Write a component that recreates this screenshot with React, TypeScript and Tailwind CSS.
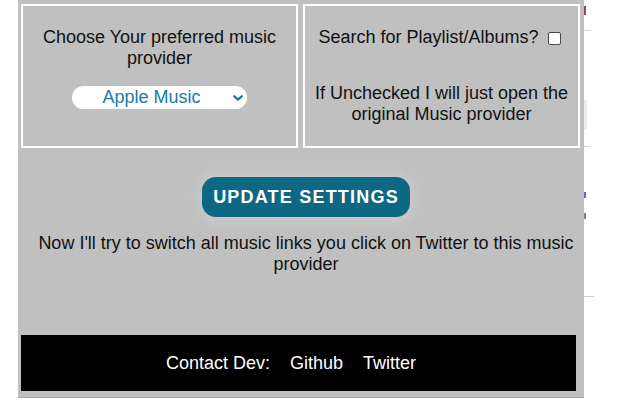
import React from "react";

export default function App() {
  return (
    <div
      className="relative w-[640px] h-[400px] bg-white overflow-hidden flex text-[#111]"
      style={{ fontFamily: '"Liberation Sans", Arial, sans-serif' }}
    >
      <div className="ml-[18px] w-[566px] h-[398px] bg-[#c0c0c0] border-b border-[#a9a9a9] pt-[4px] pl-[3px] pb-[6px] flex flex-col">
        {/* settings boxes */}
        <div className="flex gap-[5px]">
          <div className="w-[277px] h-[144px] border-2 border-white pt-[21px] flex flex-col items-center text-[18px] leading-[21px] text-center">
            <div className="px-[14px]">Choose Your preferred music provider</div>
            <div className="relative mt-[17px] w-[175px] h-[23px]">
              <select
                defaultValue="apple"
                className="appearance-none w-full h-full rounded-full bg-white border-0 outline-none text-[#1b7aa6] text-[18px] leading-[21px] pr-[16px] pl-0 py-0 text-center [text-align-last:center]"
                style={{ fontFamily: '"Liberation Sans", Arial, sans-serif' }}
              >
                <option value="apple">Apple Music</option>
                <option value="spotify">Spotify</option>
                <option value="youtube">YouTube Music</option>
              </select>
              <svg
                className="absolute right-[4px] top-[9px] pointer-events-none"
                width="10"
                height="6"
                viewBox="0 0 10 6"
              >
                <path d="M1.2 1.2 L5 4.6 L8.8 1.2" fill="none" stroke="#1b6f99" strokeWidth="2.2" strokeLinecap="round" strokeLinejoin="round" />
              </svg>
            </div>
          </div>
          <div className="w-[277px] h-[144px] border-2 border-white pt-[21px] flex flex-col items-center text-[18px] leading-[21px] text-center">
            <label className="flex items-center gap-[9px] pr-[4px]">
              <span>Search for Playlist/Albums?</span>
              <input
                type="checkbox"
                className="appearance-none w-[13px] h-[13px] bg-white border border-[#4a4a4a] rounded-[2px] mt-[1px]"
              />
            </label>
            <p className="mt-[35px] px-[8px]">If Unchecked I will just open the original Music provider</p>
          </div>
        </div>

        {/* update */}
        <div className="flex flex-col items-center pl-[7px] mt-[29px]">
          <button className="w-[208px] h-[40px] rounded-[14px] bg-[#0e6884] text-white font-bold text-[18px] tracking-[1.2px] uppercase shadow-[0_0_12px_4px_rgba(255,255,255,0.18)]">
            Update Settings
          </button>
          <p className="mt-[16px] text-[18px] leading-[21px] text-center">
            Now I'll try to switch all music links you click on Twitter to this music provider
          </p>
        </div>

        {/* footer */}
        <div className="mt-auto w-[555px] h-[56px] bg-black text-white text-[18px] flex items-center justify-center gap-[20px] pr-[15px]">
          <span>Contact Dev:</span>
          <a href="#" className="text-white">Github</a>
          <a href="#" className="text-white">Twitter</a>
        </div>
      </div>

      {/* faint remnants of the page behind the popup */}
      <div className="absolute left-[584px] top-[6px] w-[2px] h-[9px] bg-[#8a5050]" />
      <div className="absolute left-[584px] top-[30px] w-[7px] h-px bg-[#d4d4d4]" />
      <div className="absolute left-[584px] top-[100px] w-[3px] h-[30px] bg-[#ececec]" />
      <div className="absolute left-[584px] top-[146px] w-[6px] h-px bg-[#d4d4d4]" />
      <div className="absolute left-[584px] top-[192px] w-[2px] h-[6px] bg-[#6070a0]" />
      <div className="absolute left-[584px] top-[213px] w-[2px] h-[6px] bg-[#808080]" />
      <div className="absolute left-[584px] top-[296px] w-[10px] h-px bg-[#cfcfcf]" />
    </div>
  );
}
